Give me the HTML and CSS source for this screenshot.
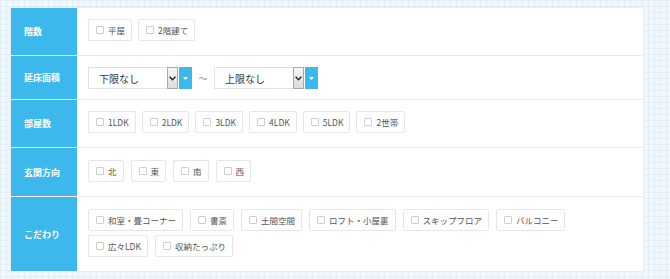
FILE: index.html
```html
<!DOCTYPE html>
<html lang="ja">
<head>
    <meta charset="UTF-8">
    <meta name="viewport" content="width=device-width, initial-scale=1.0">
    <title>検索条件</title>
    <link rel="stylesheet" href="styles.css">
</head>
<body>
    <div class="search-box">
        <div class="row">
            <div class="row-label">階数</div>
            <div class="row-body">
                <label class="chip"><span class="box"></span>平屋</label>
                <label class="chip"><span class="box"></span>2階建て</label>
            </div>
        </div>

        <div class="row">
            <div class="row-label">延床面積</div>
            <div class="row-body range">
                <div class="select">
                    <span class="select-text">下限なし</span>
                    <span class="native-arrow">
                        <svg width="7" height="5" viewBox="0 0 7 5"><path d="M0.6 0.8 L3.5 3.8 L6.4 0.8" fill="none" stroke="#222" stroke-width="1.3"/></svg>
                    </span>
                    <span class="blue-arrow">
                        <svg width="5" height="3" viewBox="0 0 5 3"><path d="M0 0 H5 L2.5 3 Z" fill="#fff"/></svg>
                    </span>
                </div>
                <span class="tilde">～</span>
                <div class="select">
                    <span class="select-text">上限なし</span>
                    <span class="native-arrow">
                        <svg width="7" height="5" viewBox="0 0 7 5"><path d="M0.6 0.8 L3.5 3.8 L6.4 0.8" fill="none" stroke="#222" stroke-width="1.3"/></svg>
                    </span>
                    <span class="blue-arrow">
                        <svg width="5" height="3" viewBox="0 0 5 3"><path d="M0 0 H5 L2.5 3 Z" fill="#fff"/></svg>
                    </span>
                </div>
            </div>
        </div>

        <div class="row">
            <div class="row-label">部屋数</div>
            <div class="row-body">
                <label class="chip"><span class="box"></span>1LDK</label>
                <label class="chip"><span class="box"></span>2LDK</label>
                <label class="chip"><span class="box"></span>3LDK</label>
                <label class="chip"><span class="box"></span>4LDK</label>
                <label class="chip"><span class="box"></span>5LDK</label>
                <label class="chip"><span class="box"></span>2世帯</label>
            </div>
        </div>

        <div class="row">
            <div class="row-label">玄関方向</div>
            <div class="row-body wide">
                <label class="chip"><span class="box"></span>北</label>
                <label class="chip"><span class="box"></span>東</label>
                <label class="chip"><span class="box"></span>南</label>
                <label class="chip"><span class="box"></span>西</label>
            </div>
        </div>

        <div class="row">
            <div class="row-label">こだわり</div>
            <div class="row-body wide">
                <label class="chip"><span class="box"></span>和室・畳コーナー</label>
                <label class="chip"><span class="box"></span>書斎</label>
                <label class="chip"><span class="box"></span>土間空間</label>
                <label class="chip"><span class="box"></span>ロフト・小屋裏</label>
                <label class="chip"><span class="box"></span>スキップフロア</label>
                <label class="chip"><span class="box"></span>バルコニー</label>
                <label class="chip"><span class="box"></span>広々LDK</label>
                <label class="chip"><span class="box"></span>収納たっぷり</label>
            </div>
        </div>
    </div>
</body>
</html>
```

FILE: styles.css
```css
body {
    margin: 0;
    padding: 8px 0 0 11px;
    font-family: "Noto Sans CJK JP", "Noto Sans", sans-serif;
    color: #444;
    background-color: #f2f7fb;
    background-image:
        linear-gradient(rgba(200, 222, 240, 0.35) 1px, transparent 1px),
        linear-gradient(90deg, rgba(200, 222, 240, 0.35) 1px, transparent 1px);
    background-size: 6px 6px;
    height: 279px;
    box-sizing: border-box;
}
.search-box {
    width: 632px;
    background: white;
    box-shadow: 0 0 0 1px #e9eef2;
}
.row {
    display: flex;
    border-bottom: 1px solid #e8e8e8;
}
.row:last-child {
    border-bottom: none;
}
.row-label {
    width: 53px;
    flex-shrink: 0;
    padding-left: 13px;
    display: flex;
    align-items: center;
    background-color: #3db8ec;
    color: white;
    font-size: 9px;
    font-weight: bold;
    box-shadow: 0 1px 0 rgba(255, 255, 255, 0.45);
}
.row-body {
    flex: 1;
    display: flex;
    flex-wrap: wrap;
    gap: 5px 6px;
    padding: 11px 11px 14px;
    align-content: flex-start;
}
.row-body.wide {
    gap: 4px 7px;
    padding-top: 12px;
}
.row-body.range {
    align-items: center;
    gap: 0;
    padding: 11px 11px 10px;
}
.chip {
    display: flex;
    align-items: center;
    height: 20px;
    padding: 0 6px 0 7px;
    border: 1px solid #e6e6e6;
    border-radius: 2px;
    font-size: 8.5px;
    line-height: 1;
    color: #555;
    white-space: nowrap;
}
.box {
    width: 6px;
    height: 6px;
    border: 1px solid #cfcfcf;
    border-radius: 1px;
    margin-right: 4px;
}
.select {
    display: flex;
    height: 22px;
}
.select-text {
    width: 68px;
    padding-left: 10px;
    display: flex;
    align-items: center;
    border: 1px solid #e2e2e2;
    border-right: none;
    font-size: 10px;
    color: #333;
}
.native-arrow {
    width: 9px;
    display: flex;
    align-items: center;
    justify-content: center;
    border: 1px solid #a9a9a9;
    background: linear-gradient(#f6f6f6, #dcdcdc);
}
.blue-arrow {
    width: 13px;
    margin-left: 1px;
    display: flex;
    align-items: center;
    justify-content: center;
    background-color: #3db8ec;
}
.tilde {
    width: 22px;
    text-align: center;
    font-size: 9px;
    color: #888;
}
```
